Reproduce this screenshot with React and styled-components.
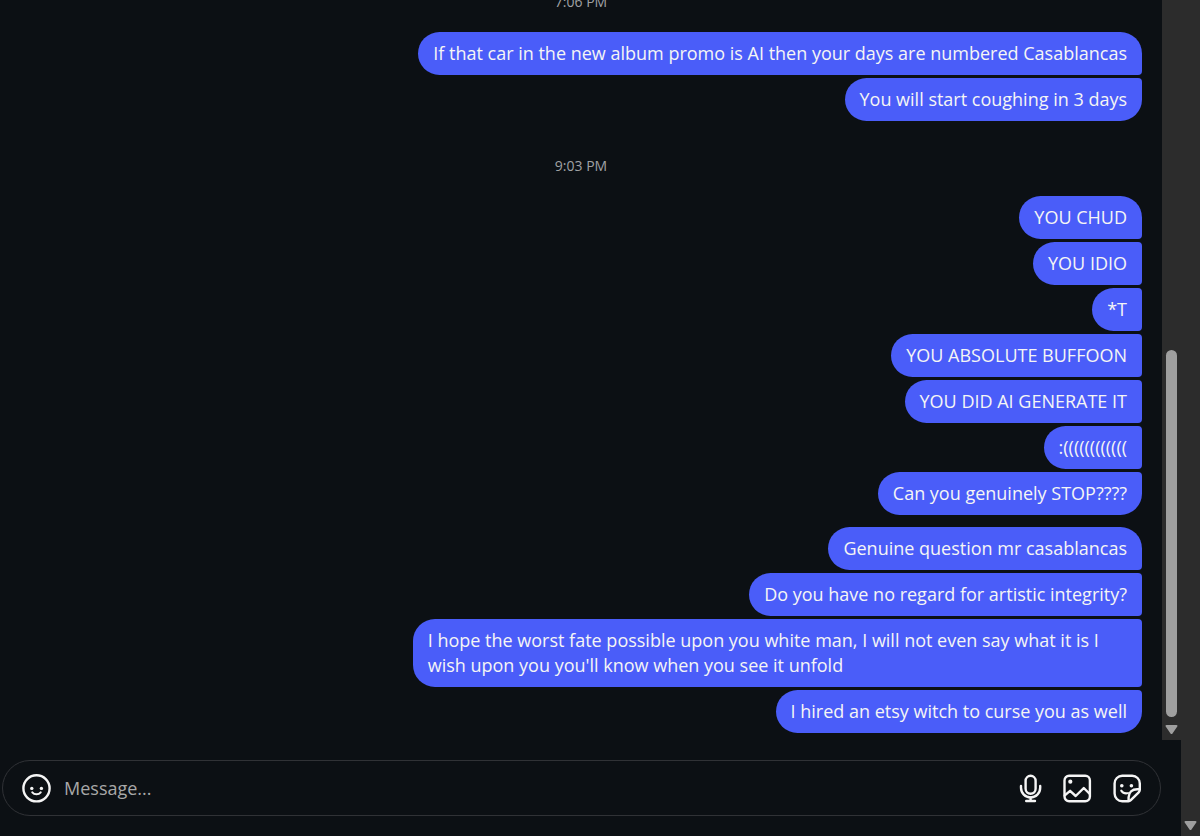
import React from "react";
import styled, { createGlobalStyle, css } from "styled-components";

const GlobalStyle = createGlobalStyle`
  * {
    box-sizing: border-box;
  }
  body {
    margin: 0;
    background-color: #0c1014;
    color: #f5f5f5;
    font-family: "Segoe UI", "Open Sans", "Noto Sans", sans-serif;
    overflow: hidden;
  }
`;

const Page = styled.div`
  display: flex;
  height: 100vh;
`;

const Conversation = styled.main`
  display: flex;
  flex: 1;
  flex-direction: column;
  min-width: 0;
`;

const Thread = styled.section`
  display: flex;
  flex: 1;
  min-height: 0;
`;

const Messages = styled.div`
  display: flex;
  flex: 1;
  flex-direction: column;
  justify-content: flex-end;
  min-width: 0;
  padding: 0 20px 7px;
  overflow: hidden;
`;

const Time = styled.time`
  flex: none;
  align-self: center;
  padding: 35px 0 20px;
  font-size: 14px;
  line-height: 20px;
  color: #a0a2a4;
`;

const Group = styled.div`
  display: flex;
  flex: none;
  flex-direction: column;
  align-items: flex-end;
  gap: 3px;
  & + & {
    margin-top: 12px;
  }
`;

const Bubble = styled.p`
  max-width: 65%;
  margin: 0;
  padding: 9px 15px;
  border-radius: 22px 4px 4px 22px;
  background-color: #4a5df9;
  font-size: 18px;
  line-height: 25px;
  &:first-child {
    border-top-right-radius: 22px;
  }
  &:last-child {
    border-bottom-right-radius: 22px;
  }
`;

const Gutter = styled.div`
  display: flex;
  flex: none;
  flex-direction: column;
  align-items: center;
  justify-content: flex-end;
  width: 19px;
  padding-bottom: 5px;
  background-color: #2c2c2c;
`;

const Thumb = styled.div`
  width: 11px;
  height: 50%;
  margin-bottom: 7px;
  border-radius: 6px;
  background-color: #9f9f9f;
`;

const Composer = styled.form`
  display: flex;
  flex: none;
  align-items: center;
  gap: 20px;
  height: 56px;
  margin: 20px 20px 20px 2px;
  padding: 0 18px;
  border: 1px solid #303236;
  border-radius: 28px;
`;

const Field = styled.input`
  flex: 1;
  min-width: 0;
  height: 40px;
  margin-left: -7px;
  padding: 0;
  border: none;
  outline: none;
  background: transparent;
  color: #f5f5f5;
  font-family: inherit;
  font-size: 18px;
  &::placeholder {
    color: #a8a8a8;
    opacity: 1;
  }
`;

const IconButton = styled.button`
  display: flex;
  flex: none;
  padding: 0;
  border: none;
  background: none;
  color: #f5f5f5;
  cursor: pointer;
  ${(props) =>
    props.$narrow &&
    css`
      width: 24px;
    `}
`;

const Icon = styled.svg`
  display: block;
  height: 30px;
  fill: none;
  stroke: currentColor;
  stroke-width: 2.4;
  stroke-linecap: round;
  stroke-linejoin: round;
  .dot {
    fill: currentColor;
    stroke: none;
  }
`;

const SmileIcon = () => (
  <Icon width="30" viewBox="0 0 30 30">
    <circle cx="15.5" cy="15.3" r="13.1" />
    <circle className="dot" cx="10.8" cy="15.4" r="1.7" />
    <circle className="dot" cx="20.4" cy="15.4" r="1.7" />
    <path d="M11.3 19.4c2 2.6 6.4 2.6 8.4 0" strokeWidth="2" />
  </Icon>
);

const MicIcon = () => (
  <Icon width="24" viewBox="0 0 24 30">
    <rect x="7.6" y="2.8" width="10" height="18" rx="5" />
    <path d="M3 13v1.8a9.6 9.6 0 0 0 19.2 0V13" />
    <path d="M12.6 24.4v3.4M8.2 28h8.8" />
  </Icon>
);

const PhotoIcon = () => (
  <Icon width="30" viewBox="0 0 30 30">
    <rect x="2.5" y="2.8" width="25.4" height="25.4" rx="4.6" />
    <circle className="dot" cx="8.3" cy="8.7" r="2.1" />
    <path d="M2.8 22.4l5.3-4.6 5.6 5.2 8.1-8 6 6" />
  </Icon>
);

const StickerIcon = () => (
  <Icon width="30" viewBox="0 0 30 30">
    <path d="M27.8 16.6v-6.2a7.6 7.6 0 0 0-7.6-7.6h-10a7.6 7.6 0 0 0-7.6 7.6v10.2a7.6 7.6 0 0 0 7.6 7.6h6.2c.9 0 1.7-.3 2.4-1l7.9-7.9c.7-.7 1.1-1.7 1.1-2.7z" />
    <path d="M27.6 16.3h-2.4c-5 0-8.4 3-8.6 8v3.6" />
    <circle className="dot" cx="9.8" cy="12.8" r="1.8" />
    <circle className="dot" cx="19.4" cy="12.8" r="1.8" />
    <path d="M9.2 17.6c1.6 2.3 4.2 3.2 6.8 2.5" strokeWidth="2" />
  </Icon>
);

const ArrowDown = () => (
  <svg width="13" height="11" viewBox="0 0 13 11" fill="#9f9f9f">
    <path d="M1.5 1h10c.9 0 1.3.9.8 1.6L7.5 9.5c-.5.7-1.500.7-2 0L.7 2.6C.2 1.900.6 1 1.500 1z" />
  </svg>
);

const thread = [
  {
    time: "7:06 PM",
    groups: [
      [
        "If that car in the new album promo is AI then your days are numbered Casablancas",
        "You will start coughing in 3 days",
      ],
    ],
  },
  {
    time: "9:03 PM",
    groups: [
      [
        "YOU CHUD",
        "YOU IDIO",
        "*T",
        "YOU ABSOLUTE BUFFOON",
        "YOU DID AI GENERATE IT",
        ":((((((((((((",
        "Can you genuinely STOP????",
      ],
      [
        "Genuine question mr casablancas",
        "Do you have no regard for artistic integrity?",
        "I hope the worst fate possible upon you white man, I will not even say what it is I wish upon you you'll know when you see it unfold",
        "I hired an etsy witch to curse you as well",
      ],
    ],
  },
];

const App = () => {
  return (
    <>
      <GlobalStyle />
      <Page>
        <Conversation>
          <Thread>
            <Messages>
              {thread.map(({ time, groups }) => (
                <React.Fragment key={time}>
                  <Time>{time}</Time>
                  {groups.map((messages) => (
                    <Group key={messages[0]}>
                      {messages.map((message) => (
                        <Bubble key={message}>{message}</Bubble>
                      ))}
                    </Group>
                  ))}
                </React.Fragment>
              ))}
            </Messages>
            <Gutter>
              <Thumb />
              <ArrowDown />
            </Gutter>
          </Thread>
          <Composer onSubmit={(e) => e.preventDefault()}>
            <IconButton type="button" aria-label="Choose an emoji">
              <SmileIcon />
            </IconButton>
            <Field type="text" placeholder="Message..." aria-label="Message" />
            <IconButton type="button" $narrow aria-label="Voice clip">
              <MicIcon />
            </IconButton>
            <IconButton type="button" aria-label="Add photo or video">
              <PhotoIcon />
            </IconButton>
            <IconButton type="button" aria-label="Choose a sticker">
              <StickerIcon />
            </IconButton>
          </Composer>
        </Conversation>
        <Gutter>
          <ArrowDown />
        </Gutter>
      </Page>
    </>
  );
};

export default App;
